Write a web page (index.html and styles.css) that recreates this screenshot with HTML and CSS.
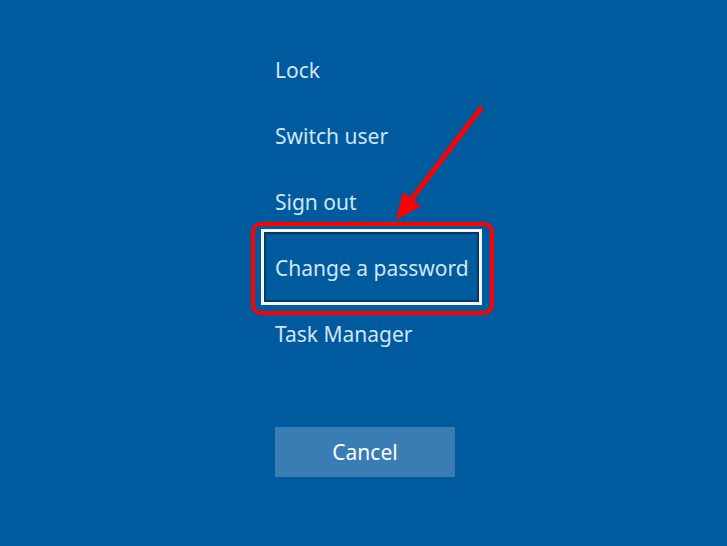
FILE: index.html
```html
<!DOCTYPE html>
<html>
<head>
<meta charset="utf-8">
<link rel="stylesheet" href="styles.css">
</head>
<body>
<main class="screen">
  <nav class="menu">
    <div class="item">Lock</div>
    <div class="item">Switch user</div>
    <div class="item">Sign out</div>
    <div class="item focused"><span class="ring"></span><span class="annot"></span>Change a password</div>
    <div class="item">Task Manager</div>
  </nav>
  <button class="cancel">Cancel</button>
</main>
<svg class="arrow" width="727" height="546" viewBox="0 0 727 546">
  <line x1="482" y1="107" x2="408" y2="204" stroke="#ff0000" stroke-width="5"/>
  <polygon points="396,220 403,192 421,206" fill="#ff0000"/>
</svg>
</body>
</html>
```
FILE: styles.css
```css
html, body {
  margin: 0;
  padding: 0;
  height: 100%;
  background: #005a9e;
  overflow: hidden;
}
.screen {
  display: flex;
  flex-direction: column;
  align-items: flex-start;
  padding: 37px 0 0 275px;
  font-family: "Noto Sans", "Open Sans", sans-serif;
}
.menu {
  display: flex;
  flex-direction: column;
}
.item {
  position: relative;
  height: 66px;
  line-height: 66px;
  font-size: 21px;
  color: #d3e5f5;
  white-space: nowrap;
}
.ring {
  position: absolute;
  left: -14px;
  top: -6px;
  width: 221px;
  height: 76px;
  box-sizing: border-box;
  border: 3px solid #f2f6fa;
  box-shadow: inset 0 0 0 2px #0b3660;
}
.annot {
  position: absolute;
  left: -24px;
  top: -13px;
  width: 243px;
  height: 93px;
  box-sizing: border-box;
  border: 4px solid #ff0000;
  border-radius: 10px;
}
.cancel {
  margin-top: 60px;
  width: 180px;
  height: 50px;
  border: none;
  background: #3a7db4;
  color: #ffffff;
  font-family: "Noto Sans", "Open Sans", sans-serif;
  font-size: 21px;
  padding: 0;
}
.arrow {
  position: absolute;
  left: 0;
  top: 0;
}
```
